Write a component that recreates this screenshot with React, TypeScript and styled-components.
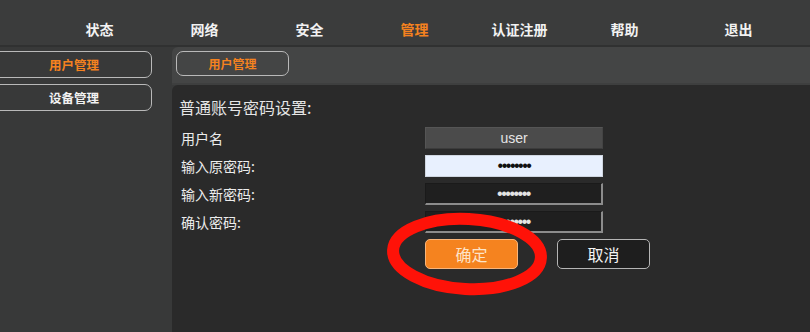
import React from "react";
import styled, { createGlobalStyle } from "styled-components";

const GlobalStyle = createGlobalStyle`
  html, body {
    margin: 0;
    padding: 0;
    background: #2a2a2a;
    font-family: "Liberation Sans", "Noto Sans CJK SC", sans-serif;
  }
`;

const Page = styled.div`
  position: relative;
  width: 810px;
  height: 332px;
  overflow: hidden;
  display: flex;
  flex-direction: column;
  background: #2a2a2a;
`;

const Header = styled.div`
  height: 47px;
  flex: none;
  display: flex;
  align-items: flex-end;
  padding-left: 47px;
  padding-bottom: 6px;
  box-sizing: border-box;
  background: #3b3c3c;
  border-bottom: 2px solid #303131;
`;

const NavItem = styled.div<{ $active?: boolean; $extra?: number }>`
  width: 105px;
  margin-left: ${(p) => p.$extra || 0}px;
  text-align: center;
  font-family: "Noto Sans CJK SC", sans-serif;
  font-size: 14px;
  font-weight: 700;
  line-height: 20px;
  color: ${(p) => (p.$active ? "#f5821f" : "#f2f2f2")};
`;

const Body = styled.div`
  flex: 1;
  display: flex;
`;

const Sidebar = styled.div`
  width: 172px;
  flex: none;
  display: flex;
  flex-direction: column;
  gap: 6px;
  padding-top: 4px;
  background: #383939;
`;

const SideButton = styled.div<{ $active?: boolean }>`
  width: 162px;
  height: 27px;
  margin-left: -10px;
  box-sizing: border-box;
  border: 1px solid #b9b9b9;
  border-radius: 7px;
  display: flex;
  align-items: center;
  justify-content: center;
  padding-left: 6px;
  font-family: "Noto Sans CJK SC", sans-serif;
  font-size: 12.5px;
  font-weight: 700;
  color: ${(p) => (p.$active ? "#f5821f" : "#f2f2f2")};
`;

const Main = styled.div`
  flex: 1;
  display: flex;
  flex-direction: column;
  background: #383939;
`;

const SubBar = styled.div`
  height: 38px;
  flex: none;
  display: flex;
  align-items: flex-start;
  padding: 4px 0 0 4px;
  box-sizing: border-box;
  background: #444545;
  border-bottom: 2px solid #3e3f3f;
  border-radius: 6px 0 0 0;
`;

const Tab = styled.div`
  width: 113px;
  height: 25px;
  box-sizing: border-box;
  border: 1px solid #b9b9b9;
  border-radius: 7px;
  display: flex;
  align-items: center;
  justify-content: center;
  font-family: "Noto Sans CJK SC", sans-serif;
  font-size: 12px;
  font-weight: 700;
  color: #f5821f;
`;

const Panel = styled.div`
  flex: 1;
  background: #2a2a2a;
  border-radius: 6px 0 0 0;
  padding: 11px 0 0 7px;
`;

const Title = styled.div`
  font-family: "Noto Sans CJK SC", sans-serif;
  font-size: 16px;
  line-height: 22px;
  color: #e6e6e6;
  margin-bottom: 9px;
`;

const Form = styled.div`
  display: grid;
  grid-template-columns: 244px 178px;
  row-gap: 6px;
  padding-left: 2px;
`;

const Label = styled.div`
  font-family: "Noto Sans CJK SC", sans-serif;
  font-size: 14px;
  line-height: 22px;
  color: #ececec;
  align-self: center;
`;

const Field = styled.input<{ $kind: "plain" | "filled" | "dark" }>`
  width: 178px;
  height: 22px;
  box-sizing: border-box;
  margin: 0;
  padding: 0;
  text-align: center;
  outline: none;
  font-family: "Liberation Sans", sans-serif;
  font-size: ${(p) => (p.$kind === "plain" ? "14px" : "16px")};
  letter-spacing: ${(p) => (p.$kind === "plain" ? "0" : "-1.5px")};
  background: ${(p) =>
    p.$kind === "plain" ? "#4b4b4b" : p.$kind === "filled" ? "#e8f0fe" : "#1f1f1f"};
  color: ${(p) => (p.$kind === "filled" ? "#111" : "#e4e4e4")};
  border: 1px solid;
  border-color: ${(p) =>
    p.$kind === "plain"
      ? "#555 #444 #3c3c3c #555"
      : p.$kind === "filled"
      ? "#cfd6e0"
      : "#1a1a1a #8c8c8c #8c8c8c #1a1a1a"};
  border-width: ${(p) => (p.$kind === "dark" ? "1px 2px 2px 1px" : "1px")};
`;

const Actions = styled.div`
  display: flex;
  gap: 39px;
  margin: 6px 0 0 246px;
`;

const Button = styled.div<{ $primary?: boolean }>`
  width: 93px;
  height: 30px;
  box-sizing: border-box;
  display: flex;
  align-items: center;
  justify-content: center;
  border-radius: 5px;
  font-family: "Noto Sans CJK SC", sans-serif;
  font-size: 16px;
  background: ${(p) => (p.$primary ? "#f5831f" : "#1e1e1e")};
  border: 1px solid ${(p) => (p.$primary ? "#f9b57a" : "#b5b5b5")};
  color: ${(p) => (p.$primary ? "#fde3c8" : "#f4f4f4")};
`;

const Annotation = styled.svg`
  position: absolute;
  left: 380px;
  top: 206px;
  pointer-events: none;
`;

const navItems = ["状态", "网络", "安全", "管理", "认证注册", "帮助", "退出"];

export default function App() {
  return (
    <>
      <GlobalStyle />
      <Page>
        <Header>
          {navItems.map((n) => (
            <NavItem key={n} $active={n === "管理"} $extra={n === "退出" ? 9 : 0}>
              {n}
            </NavItem>
          ))}
        </Header>
        <Body>
          <Sidebar>
            <SideButton $active>用户管理</SideButton>
            <SideButton>设备管理</SideButton>
          </Sidebar>
          <Main>
            <SubBar>
              <Tab>用户管理</Tab>
            </SubBar>
            <Panel>
              <Title>普通账号密码设置:</Title>
              <Form>
                <Label>用户名</Label>
                <Field $kind="plain" readOnly value="user" />
                <Label>输入原密码:</Label>
                <Field $kind="filled" readOnly type="password" value="12345678" />
                <Label>输入新密码:</Label>
                <Field $kind="dark" readOnly type="password" value="12345678" />
                <Label>确认密码:</Label>
                <Field $kind="dark" readOnly type="password" value="12345678" />
              </Form>
              <Actions>
                <Button $primary>确定</Button>
                <Button>取消</Button>
              </Actions>
            </Panel>
          </Main>
        </Body>
        <Annotation width="176" height="100" viewBox="0 0 176 100">
          <ellipse
            cx="87"
            cy="48"
            rx="74"
            ry="35"
            fill="none"
            stroke="#ff1208"
            strokeWidth="12"
            transform="rotate(3 87 48)"
          />
        </Annotation>
      </Page>
    </>
  );
}
